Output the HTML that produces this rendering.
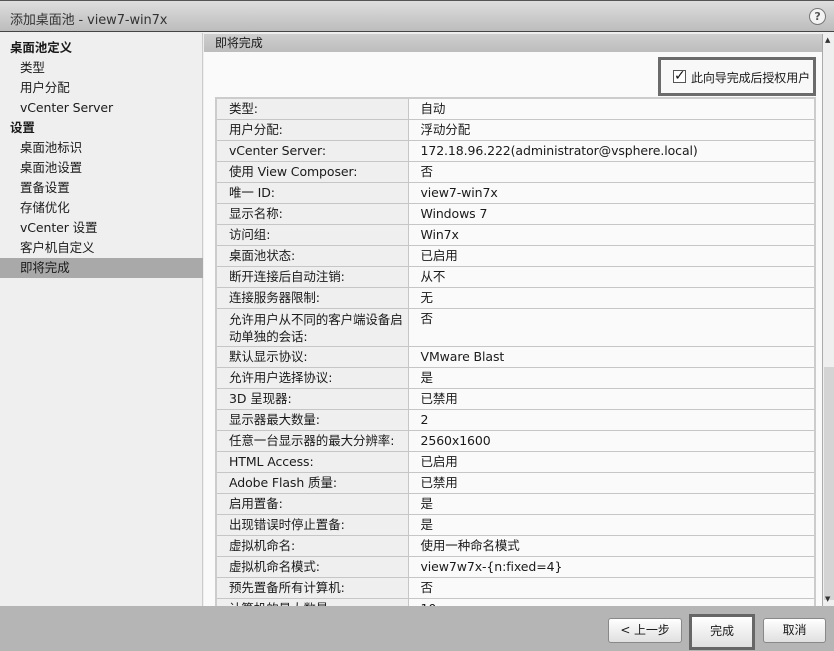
<!DOCTYPE html>
<html><head><meta charset="utf-8"><style>
*{margin:0;padding:0;box-sizing:border-box}
body{width:834px;height:651px;overflow:hidden;background:#eee;font-family:"DejaVu Sans","Noto Sans CJK SC",sans-serif;font-size:12px;color:#1a1a1a;position:relative;letter-spacing:-0.1px}
.title{position:absolute;left:0;top:0;width:834px;height:32px;background:linear-gradient(#dedede,#bcbcbc);border-bottom:1px solid #444;border-top:1px solid #555}
.title span{position:absolute;left:10px;top:8px;font-size:13px;color:#333}
.help{position:absolute;right:8px;top:7px;width:17px;height:17px;border-radius:50%;background:#f4f4f4;border:1px solid #777;font-size:11px;text-align:center;line-height:15px;font-weight:bold;color:#555}
.side{position:absolute;left:0;top:33px;width:203px;height:573px;background:#efefef;border-right:1px solid #ccc}
.side div{position:absolute;left:20px;height:20px;line-height:20px;font-size:12.5px;color:#1a1a1a}
.side .h{left:10px;font-weight:bold}
.side .sel{left:0;width:203px;padding-left:20px;background:#a9a9a9}
.hdr{position:absolute;left:204px;top:34px;width:618px;height:18px;background:linear-gradient(#cfcfcf,#bdbdbd);font-size:12px;padding-left:11px;line-height:18px}
.content{position:absolute;left:204px;top:52px;width:618px;height:554px;background:#fafafa;overflow:hidden}
.chk{position:absolute;left:454px;top:5px;width:158px;height:39px;border:3px solid #6b6b6b;background:#f8f8f8}
.chk i{position:absolute;left:12px;top:10px;width:13px;height:13px;border:1px solid #555;background:#fff;font-style:normal;font-size:14px;line-height:11px;text-align:center;font-weight:bold;color:#111}
.chk span{position:absolute;left:30px;top:9px;font-size:12px}
table{position:absolute;left:11px;top:45px;width:601px;border-collapse:collapse;border:2px solid #ccc}
td{border:1px solid #c6c6c6;height:21px;padding:0 0 0 12px;vertical-align:top;line-height:19px;font-size:12.5px}
td:first-child{width:192px;background:#efefef}
td:last-child{background:#fafafa;padding-left:12px}
.sb{position:absolute;left:822px;top:34px;width:12px;height:572px;background:#efefef;border-left:1px solid #aaa}
.sb .th{position:absolute;left:1px;top:333px;width:10px;height:233px;background:#d4d4d4}
.sb .a{position:absolute;left:2px;font-size:7px;color:#333}
.foot{position:absolute;left:0;top:606px;width:834px;height:45px;background:#b5b5b5}
.btn{position:absolute;top:12px;height:25px;border:1px solid #888;border-radius:3px;background:linear-gradient(#fff,#e0e0e0);text-align:center;line-height:23px;font-size:12px}
</style></head><body>
<div class="title"><span>添加桌面池 - view7-win7x</span><div class="help">?</div></div>
<div class="side">
<div class="h" style="top:5px">桌面池定义</div>
<div style="top:25px">类型</div>
<div style="top:45px">用户分配</div>
<div style="top:65px">vCenter Server</div>
<div class="h" style="top:85px">设置</div>
<div style="top:105px">桌面池标识</div>
<div style="top:125px">桌面池设置</div>
<div style="top:145px">置备设置</div>
<div style="top:165px">存储优化</div>
<div style="top:185px">vCenter 设置</div>
<div style="top:205px">客户机自定义</div>
<div class="sel" style="top:225px">即将完成</div>
</div>
<div class="hdr">即将完成</div>
<div class="content">
<div class="chk"><i>✓</i><span>此向导完成后授权用户</span></div>
<table>
<tr><td>类型:</td><td>自动</td></tr>
<tr><td>用户分配:</td><td>浮动分配</td></tr>
<tr><td>vCenter Server:</td><td>172.18.96.222(administrator@vsphere.local)</td></tr>
<tr><td>使用 View Composer:</td><td>否</td></tr>
<tr><td>唯一 ID:</td><td>view7-win7x</td></tr>
<tr><td>显示名称:</td><td>Windows 7</td></tr>
<tr><td>访问组:</td><td>Win7x</td></tr>
<tr><td>桌面池状态:</td><td>已启用</td></tr>
<tr><td>断开连接后自动注销:</td><td>从不</td></tr>
<tr><td>连接服务器限制:</td><td>无</td></tr>
<tr><td style="height:38px;line-height:17px;padding-top:2px">允许用户从不同的客户端设备启<br>动单独的会话:</td><td>否</td></tr>
<tr><td>默认显示协议:</td><td>VMware Blast</td></tr>
<tr><td>允许用户选择协议:</td><td>是</td></tr>
<tr><td>3D 呈现器:</td><td>已禁用</td></tr>
<tr><td>显示器最大数量:</td><td>2</td></tr>
<tr><td>任意一台显示器的最大分辨率:</td><td>2560x1600</td></tr>
<tr><td>HTML Access:</td><td>已启用</td></tr>
<tr><td>Adobe Flash 质量:</td><td>已禁用</td></tr>
<tr><td>启用置备:</td><td>是</td></tr>
<tr><td>出现错误时停止置备:</td><td>是</td></tr>
<tr><td>虚拟机命名:</td><td>使用一种命名模式</td></tr>
<tr><td>虚拟机命名模式:</td><td>view7w7x-{n:fixed=4}</td></tr>
<tr><td>预先置备所有计算机:</td><td>否</td></tr>
<tr><td>计算机的最大数量:</td><td>10</td></tr>
</table>
</div>
<div class="sb"><span class="a" style="top:2px">▲</span><div class="th"></div><span class="a" style="top:561px">▼</span></div>
<div class="foot">
<div class="btn" style="left:608px;width:74px">&lt; 上一步</div>
<div class="btn" style="left:689px;top:8px;width:66px;height:36px;border:3px solid #666;border-radius:0;line-height:28px">完成</div>
<div class="btn" style="left:763px;width:63px">取消</div>
</div>
</body></html>
